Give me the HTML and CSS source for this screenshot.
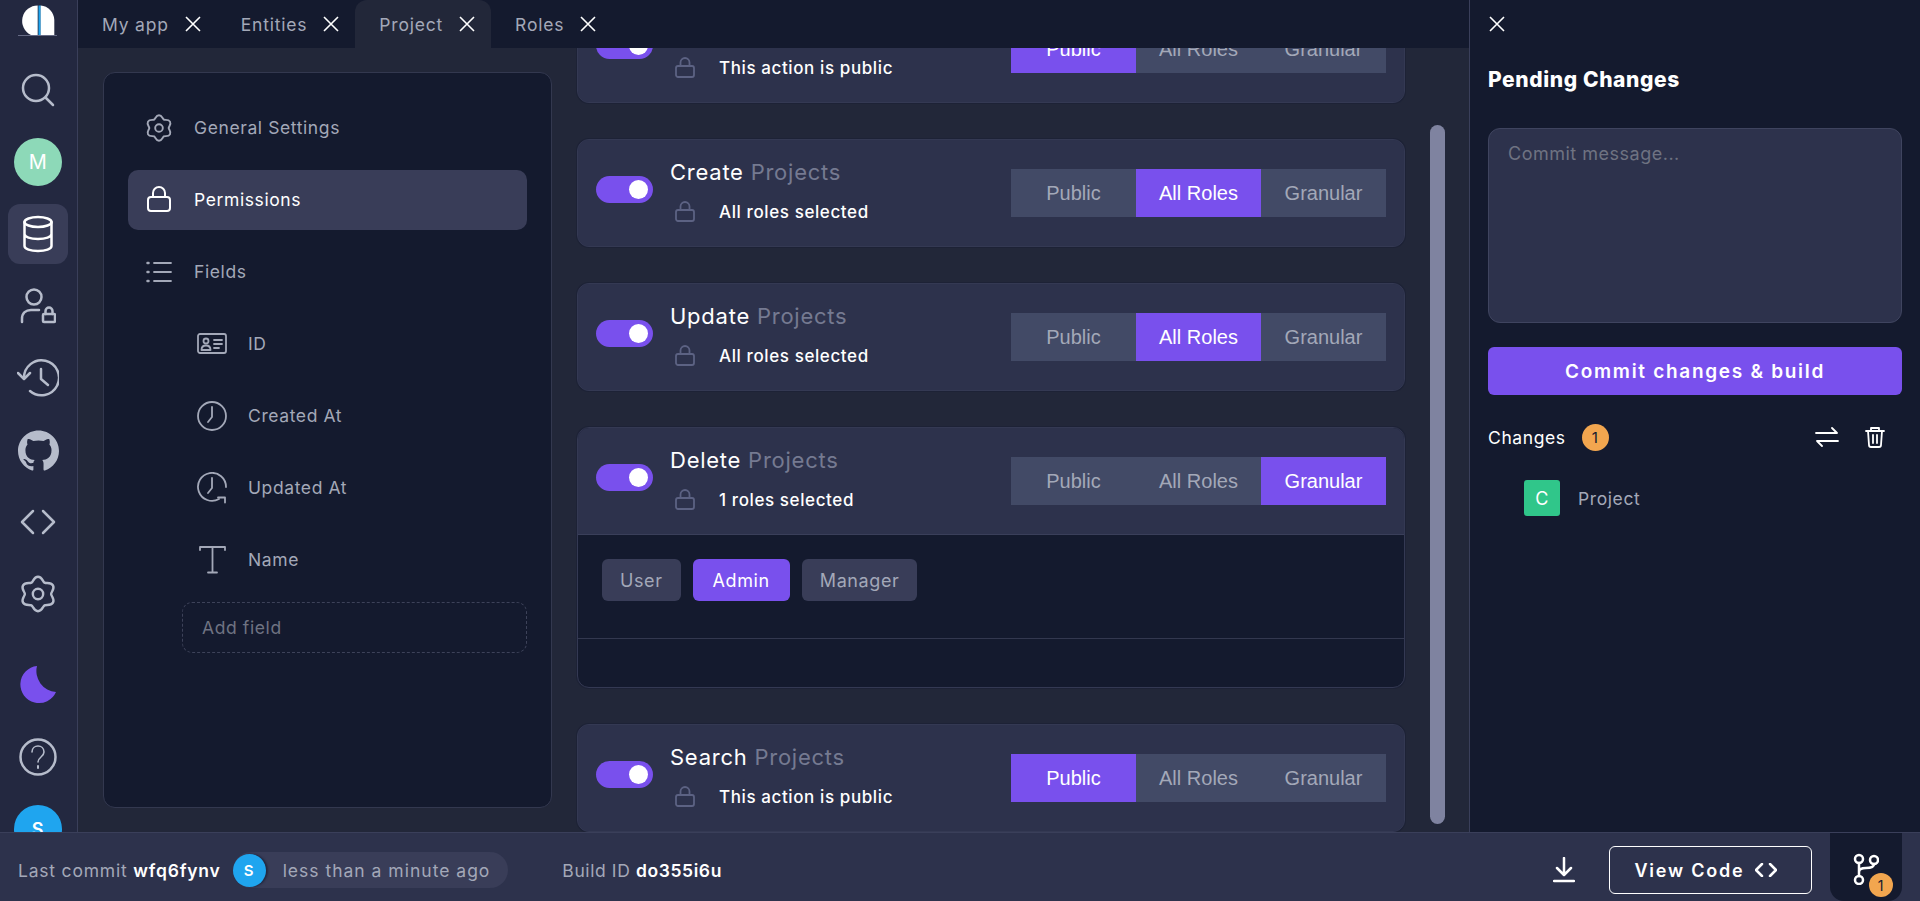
FILE: index.html
```html
<!DOCTYPE html>
<html lang="en">
<head>
    <meta charset="UTF-8">
    <meta name="viewport" content="width=device-width, initial-scale=1.0">
    <title>Project Permissions</title>
    <link rel="stylesheet" href="styles.css">
</head>
<body>
    <div class="app">
        <!-- Left icon rail -->
        <nav class="rail">
            <div class="rail-logo">
                <svg width="40" height="34" viewBox="0 0 40 34">
                    <path fill="#fff" d="M19.700 2.500A15.500 15.500 0 0 0 13 32H19.700Z"/>
                    <rect x="20.500" y="2.500" width="2.200" height="29.500" fill="#1fa5ef"/>
                    <path fill="#fff" d="M22.700 2.500C30 3 36 9 36.300 17V32H22.700Z"/>
                    <rect x="0" y="32" width="39" height="1" fill="#666b85"/>
                </svg>
            </div>
            <a class="rail-item">
                <svg class="icon" width="34" height="34" viewBox="0 0 34 34"><circle cx="15" cy="15" r="13"/><path d="M25 25l7 7"/></svg>
            </a>
            <a class="rail-item"><span class="avatar avatar-green">M</span></a>
            <a class="rail-item active">
                <svg class="icon icon-white" width="32" height="38" viewBox="0 0 32 38"><ellipse cx="16" cy="7" rx="13.500" ry="5"/><path d="M2.500 7v24c0 3 6 5 13.500 5s13.500-2 13.500-5V7M2.500 19c0 3 6 5 13.500 5s13.500-2 13.500-5"/></svg>
            </a>
            <a class="rail-item">
                <svg class="icon" width="36" height="36" viewBox="0 0 36 36"><circle cx="14" cy="9" r="7.500"/><path d="M2 34v-3c0-6 4-9 9-9h8"/><rect x="23" y="26" width="12" height="8" rx="1"/><path d="M25.500 26v-3a3.500 3.500 0 0 1 7 0v3"/></svg>
            </a>
            <a class="rail-item">
                <svg class="icon" width="42" height="38" viewBox="0 0 42 38"><path d="M7 19A17.500 17.500 0 1 1 13 32"/><path d="M1 14l6 6 6-6"/><path d="M24 10v10l7 6"/></svg>
            </a>
            <a class="rail-item">
                <svg width="41" height="41" viewBox="0 0 24 24" fill="#b6bccb"><path d="M12 .297c-6.630 0-12 5.373-12 12 0 5.303 3.438 9.800 8.205 11.385.6.113.820-.258.820-.577 0-.285-.010-1.040-.015-2.040-3.338.724-4.042-1.610-4.042-1.610C4.422 18.070 3.633 17.700 3.633 17.700c-1.087-.744.084-.729.084-.729 1.205.084 1.838 1.236 1.838 1.236 1.070 1.835 2.809 1.305 3.495.998.108-.776.417-1.305.760-1.605-2.665-.300-5.466-1.332-5.466-5.930 0-1.310.465-2.380 1.235-3.220-.135-.303-.540-1.523.105-3.176 0 0 1.005-.322 3.300 1.230.960-.267 1.980-.399 3-.405 1.020.006 2.040.138 3 .405 2.280-1.552 3.285-1.230 3.285-1.230.645 1.653.240 2.873.120 3.176.765.840 1.230 1.910 1.230 3.220 0 4.610-2.805 5.625-5.475 5.920.420.360.810 1.096.810 2.220 0 1.606-.015 2.896-.015 3.286 0 .315.210.690.825.570C20.565 22.092 24 17.592 24 12.297c0-6.627-5.373-12-12-12"/></svg>
            </a>
            <a class="rail-item">
                <svg class="icon" width="36" height="26" viewBox="0 0 36 26"><path d="M13 2L2 13l11 11M23 2l11 11-11 11"/></svg>
            </a>
            <a class="rail-item">
                <svg class="icon" width="38" height="38" viewBox="1 1 22 22"><path stroke-width="1.400" d="M12 2C14.400 2 14.760 4.820 15.800 5.420 16.840 6.020 19.460 4.920 20.660 7 21.860 9.080 19.600 10.800 19.600 12 19.600 13.200 21.860 14.920 20.660 17 19.460 19.080 16.840 17.980 15.800 18.580 14.760 19.180 14.400 22 12 22 9.600 22 9.240 19.180 8.200 18.580 7.160 17.980 4.540 19.080 3.340 17 2.140 14.920 4.400 13.200 4.400 12 4.400 10.800 2.140 9.080 3.340 7 4.540 4.920 7.160 6.020 8.200 5.420 9.240 4.820 9.600 2 12 2Z"/><circle stroke-width="1.400" cx="12" cy="12" r="3"/></svg>
            </a>
            <a class="rail-item rail-moon">
                <svg width="37" height="38" viewBox="0 0 37 38"><path fill="#7950ed" d="M17 0A18.600 18.600 0 1 0 36 26A21 21 0 0 1 17 0Z"/></svg>
            </a>
            <a class="rail-item">
                <svg class="icon" width="38" height="38" viewBox="0 0 38 38"><circle cx="19" cy="19" r="17.500"/><path stroke-width="1.600" d="M13 14c0-4 3-6 6-6s6 2 6 6c0 5-6 5-6 10"/><path stroke-width="2" d="M19 28v2"/></svg>
            </a>
            <a class="rail-item"><span class="avatar avatar-blue">S</span></a>
        </nav>

        <main class="workspace">
            <div class="tabs">
                <div class="tab"><span>My app</span><svg class="tab-close" width="18" height="18" viewBox="0 0 18 18"><path d="M2 2l14 14M16 2L2 16"/></svg></div>
                <div class="tab"><span>Entities</span><svg class="tab-close" width="18" height="18" viewBox="0 0 18 18"><path d="M2 2l14 14M16 2L2 16"/></svg></div>
                <div class="tab tab-active"><span>Project</span><svg class="tab-close" width="18" height="18" viewBox="0 0 18 18"><path d="M2 2l14 14M16 2L2 16"/></svg></div>
                <div class="tab"><span>Roles</span><svg class="tab-close" width="18" height="18" viewBox="0 0 18 18"><path d="M2 2l14 14M16 2L2 16"/></svg></div>
            </div>

            <div class="content">
                <aside class="entity-panel">
                    <a class="entity-item">
                        <svg class="icon icon-thin" width="28" height="28" viewBox="1 1 22 22"><path stroke-width="1.500" d="M12 2C14.400 2 14.760 4.820 15.800 5.420 16.840 6.020 19.460 4.920 20.660 7 21.860 9.080 19.600 10.800 19.600 12 19.600 13.200 21.860 14.920 20.660 17 19.460 19.080 16.840 17.980 15.800 18.580 14.760 19.180 14.400 22 12 22 9.600 22 9.240 19.180 8.200 18.580 7.160 17.980 4.540 19.080 3.340 17 2.140 14.920 4.400 13.200 4.400 12 4.400 10.800 2.140 9.080 3.340 7 4.540 4.920 7.160 6.020 8.200 5.420 9.240 4.820 9.600 2 12 2Z"/><circle stroke-width="1.500" cx="12" cy="12" r="3"/></svg>
                        <span>General Settings</span>
                    </a>
                    <a class="entity-item selected">
                        <svg class="icon icon-white" width="28" height="28" viewBox="0 0 26 28"><rect x="2" y="11" width="22" height="14" rx="3"/><path d="M7 11V7a6 6 0 0 1 12 0v4"/></svg>
                        <span>Permissions</span>
                    </a>
                    <a class="entity-item">
                        <svg class="icon icon-thin" width="28" height="22" viewBox="0 0 26 22"><path d="M8 2h17M8 11h17M8 20h17"/><path stroke-width="2.500" d="M1.500 2h1M1.500 11h1M1.500 20h1"/></svg>
                        <span>Fields</span>
                    </a>
                    <a class="entity-item field">
                        <svg class="icon icon-thin" width="30" height="22" viewBox="0 0 30 22"><rect x="1" y="1" width="28" height="19" rx="2"/><circle cx="9" cy="8" r="2.500"/><path d="M4.500 17c0-3 2-4.500 4.500-4.500s4.500 1.500 4.500 4.500zM17 7h8M17 11h8M17 15h5"/></svg>
                        <span>ID</span>
                    </a>
                    <a class="entity-item field">
                        <svg class="icon icon-thin" width="30" height="30" viewBox="0 0 30 30"><circle cx="15" cy="15" r="14"/><path d="M15 6v10l-4 5"/></svg>
                        <span>Created At</span>
                    </a>
                    <a class="entity-item field">
                        <svg class="icon icon-thin" width="30" height="32" viewBox="0 0 30 32"><path d="M29 15A14 14 0 1 0 22 27"/><path d="M15 6v10l-4 5"/><path d="M21 25.500h7v5"/></svg>
                        <span>Updated At</span>
                    </a>
                    <a class="entity-item field">
                        <svg class="icon icon-thin" width="30" height="30" viewBox="0 0 30 30"><path d="M3 5V2h25v3M15.500 2v25M11 27.500h9"/></svg>
                        <span>Name</span>
                    </a>
                    <input class="add-field" type="text" placeholder="Add field">
                </aside>

                <section class="permissions">
                    <div class="perm-card">
                        <div class="perm-header">
                            <span class="toggle"></span>
                            <div class="perm-text">
                                <div class="perm-title">Read <span>Projects</span></div>
                                <div class="perm-status"><svg class="perm-lock" width="20" height="21" viewBox="0 0 20 21"><rect x="1" y="9" width="18" height="11" rx="2"/><path d="M5.500 9V5.500a4.500 4.500 0 0 1 9 0V9"/></svg>This action is public</div>
                            </div>
                            <div class="segments">
                                <button class="segment on">Public</button><button class="segment">All Roles</button><button class="segment">Granular</button>
                            </div>
                        </div>
                    </div>

                    <div class="perm-card">
                        <div class="perm-header">
                            <span class="toggle"></span>
                            <div class="perm-text">
                                <div class="perm-title">Create <span>Projects</span></div>
                                <div class="perm-status"><svg class="perm-lock" width="20" height="21" viewBox="0 0 20 21"><rect x="1" y="9" width="18" height="11" rx="2"/><path d="M5.500 9V5.500a4.500 4.500 0 0 1 9 0V9"/></svg>All roles selected</div>
                            </div>
                            <div class="segments">
                                <button class="segment">Public</button><button class="segment on">All Roles</button><button class="segment">Granular</button>
                            </div>
                        </div>
                    </div>

                    <div class="perm-card">
                        <div class="perm-header">
                            <span class="toggle"></span>
                            <div class="perm-text">
                                <div class="perm-title">Update <span>Projects</span></div>
                                <div class="perm-status"><svg class="perm-lock" width="20" height="21" viewBox="0 0 20 21"><rect x="1" y="9" width="18" height="11" rx="2"/><path d="M5.500 9V5.500a4.500 4.500 0 0 1 9 0V9"/></svg>All roles selected</div>
                            </div>
                            <div class="segments">
                                <button class="segment">Public</button><button class="segment on">All Roles</button><button class="segment">Granular</button>
                            </div>
                        </div>
                    </div>

                    <div class="perm-card perm-open">
                        <div class="perm-header">
                            <span class="toggle"></span>
                            <div class="perm-text">
                                <div class="perm-title">Delete <span>Projects</span></div>
                                <div class="perm-status"><svg class="perm-lock" width="20" height="21" viewBox="0 0 20 21"><rect x="1" y="9" width="18" height="11" rx="2"/><path d="M5.500 9V5.500a4.500 4.500 0 0 1 9 0V9"/></svg>1 roles selected</div>
                            </div>
                            <div class="segments">
                                <button class="segment">Public</button><button class="segment">All Roles</button><button class="segment on">Granular</button>
                            </div>
                        </div>
                        <div class="role-list">
                            <span class="role">User</span>
                            <span class="role role-on">Admin</span>
                            <span class="role">Manager</span>
                        </div>
                        <div class="perm-foot"></div>
                    </div>

                    <div class="perm-card">
                        <div class="perm-header">
                            <span class="toggle"></span>
                            <div class="perm-text">
                                <div class="perm-title">Search <span>Projects</span></div>
                                <div class="perm-status"><svg class="perm-lock" width="20" height="21" viewBox="0 0 20 21"><rect x="1" y="9" width="18" height="11" rx="2"/><path d="M5.500 9V5.500a4.500 4.500 0 0 1 9 0V9"/></svg>This action is public</div>
                            </div>
                            <div class="segments">
                                <button class="segment on">Public</button><button class="segment">All Roles</button><button class="segment">Granular</button>
                            </div>
                        </div>
                    </div>
                </section>

                <div class="scroll-thumb"></div>
            </div>
        </main>

        <!-- Pending changes drawer -->
        <aside class="drawer">
            <svg class="drawer-close" width="18" height="18" viewBox="0 0 18 18"><path d="M2 2l14 14M16 2L2 16"/></svg>
            <h2 class="drawer-title">Pending Changes</h2>
            <textarea class="commit-message" placeholder="Commit message..."></textarea>
            <button class="commit-btn">Commit changes &amp; build</button>
            <div class="changes-row">
                <span class="changes-label">Changes</span>
                <span class="count">1</span>
                <svg class="icon icon-white changes-swap" width="24" height="20" viewBox="0 0 24 20"><path stroke-width="1.800" d="M1 6h21M17 1l5 5M23 14H2M7 19l-5-5"/></svg>
                <svg class="icon icon-white changes-trash" width="20" height="22" viewBox="0 0 20 22"><path stroke-width="1.800" d="M1 5h18M6 5V2h8v3M3 5l1 14a2 2 0 0 0 2 2h8a2 2 0 0 0 2-2l1-14M8 9v8M12 9v8"/></svg>
            </div>
            <div class="change-item">
                <span class="change-badge">C</span>
                <span>Project</span>
            </div>
        </aside>
    </div>

    <footer class="statusbar">
        <span class="muted">Last commit <b>wfq6fynv</b></span>
        <div class="commit-pill">
            <span class="avatar avatar-blue avatar-small">S</span>
            <span class="muted">less than a minute ago</span>
        </div>
        <span class="muted build-id">Build ID <b>do355i6u</b></span>
        <svg class="icon icon-white download" width="22" height="26" viewBox="0 0 22 26"><path d="M11 1v16M4 11l7 7 7-7M1 24h20"/></svg>
        <button class="view-code">View Code <svg class="icon icon-white" width="22" height="14" viewBox="0 0 22 14"><path d="M7 1L1 7l6 6M15 1l6 6-6 6"/></svg></button>
        <div class="branch-box">
            <svg class="icon icon-white" width="26" height="32" viewBox="0 0 26 32"><circle cx="6" cy="6" r="4"/><circle cx="6" cy="27" r="4"/><circle cx="21" cy="7" r="4"/><path d="M6 10v13M6 19c0-3 3-4 7-4s8-1 8-4"/></svg>
            <span class="branch-count">1</span>
        </div>
    </footer>
</body>
</html>
```

FILE: styles.css
```css
* {
    box-sizing: border-box;
}
html, body {
    height: 100%;
}
body {
    margin: 0;
    font-family: Inter, "Liberation Sans", sans-serif;
    font-size: 17.5px;
    letter-spacing: 0.6px;
    background-color: #222739;
    color: #a3a8b8;
    overflow: hidden;
}
button {
    font-family: inherit;
    border: none;
    cursor: pointer;
}
.app {
    display: flex;
    height: 832px;
}

/* icons */
.icon {
    fill: none;
    stroke: #b6bccb;
    stroke-width: 2.5;
    stroke-linecap: round;
    stroke-linejoin: round;
    flex-shrink: 0;
}
.icon-white {
    stroke: #fff;
}
.icon-thin {
    stroke: #a3a8b8;
    stroke-width: 1.800;
}
.entity-item.selected .icon {
    stroke: #fff;
    stroke-width: 2;
}

/* rail */
.rail {
    width: 78px;
    flex-shrink: 0;
    height: 832px;
    padding-left: 8px;
    background-color: #232840;
    border-right: 1px solid #3a3f5a;
    display: flex;
    flex-direction: column;
    gap: 12px;
    overflow: hidden;
}
.rail-logo {
    height: 48px;
    flex-shrink: 0;
    display: flex;
    align-items: flex-start;
    padding: 3px 0 0 10px;
}
.rail-item {
    width: 60px;
    height: 60px;
    flex-shrink: 0;
    display: flex;
    align-items: center;
    justify-content: center;
    border-radius: 12px;
}
.rail-item.active {
    background-color: #393d58;
}
.rail-moon {
    margin-top: 19px;
}
.avatar {
    width: 48px;
    height: 48px;
    border-radius: 50%;
    display: flex;
    align-items: center;
    justify-content: center;
    color: #fff;
    font-size: 20px;
    flex-shrink: 0;
}
.avatar-green {
    background-color: #8dd9b8;
}
.avatar-blue {
    background-color: #1fa5ef;
    font-size: 18px;
    font-weight: 600;
}
.avatar-small {
    width: 33px;
    height: 33px;
    font-size: 15px;
    box-shadow: 2px 0 2px #232840;
}

/* tabs */
.workspace {
    flex: 1;
    min-width: 0;
    display: flex;
    flex-direction: column;
}
.tabs {
    height: 48px;
    flex-shrink: 0;
    display: flex;
    background-color: #141a2e;
    position: relative;
    z-index: 1;
}
.tab {
    display: flex;
    align-items: center;
    gap: 15px;
    padding: 0 15px 0 24px;
    color: #a3a8b8;
    letter-spacing: 0.8px;
}
.tab-active {
    background-color: #222739;
    border-radius: 12px 12px 0 0;
}
.tab-close {
    fill: none;
    stroke: #fff;
    stroke-width: 1.600;
    flex-shrink: 0;
}

/* entity panel */
.content {
    flex: 1;
    min-height: 0;
    display: flex;
    padding-left: 25px;
    overflow: hidden;
}
.entity-panel {
    width: 449px;
    height: 736px;
    margin-top: 24px;
    margin-right: 25px;
    flex-shrink: 0;
    padding: 25px 24px 0;
    background-color: #141a2e;
    border: 1px solid #33384f;
    border-radius: 12px;
    display: flex;
    flex-direction: column;
    gap: 12px;
}
.entity-item {
    height: 60px;
    flex-shrink: 0;
    display: flex;
    align-items: center;
    gap: 21px;
    padding-left: 17px;
    border-radius: 10px;
    color: #a3a8b8;
}
.entity-item span {
    margin-top: -2px;
}
.entity-item.selected {
    background-color: #393d58;
    color: #fff;
}
.entity-item.field {
    margin-left: 54px;
    padding-left: 15px;
    gap: 21px;
}
.add-field {
    height: 51px;
    flex-shrink: 0;
    margin-left: 54px;
    padding: 0 19px;
    background: transparent;
    border: 1px dashed #3d4259;
    border-radius: 10px;
    font: inherit;
    letter-spacing: inherit;
    color: #6f7382;
    outline: none;
}
.add-field::placeholder,
.commit-message::placeholder {
    color: #6f7382;
    opacity: 1;
}

/* permission cards */
.permissions {
    width: 828px;
    flex-shrink: 0;
    margin-top: -53px;
    display: flex;
    flex-direction: column;
    gap: 36px;
}
.perm-card {
    flex-shrink: 0;
    height: 108px;
    background-color: #2d324c;
    border: 1px solid #343953;
    border-radius: 12px;
    box-shadow: 0 0 0 1px #1d2236;
    overflow: hidden;
}
.perm-open {
    height: 261px;
    background-color: #141a2e;
}
.perm-header {
    height: 106px;
    padding: 0 18px 0 18px;
    background-color: #2d324c;
    display: flex;
    align-items: center;
}
.perm-open .perm-header {
    height: 107px;
    border-bottom: 1px solid #3a3f5a;
}
.toggle {
    width: 57px;
    height: 27px;
    margin-top: -8px;
    border-radius: 14px;
    background-color: #7950ed;
    position: relative;
    flex-shrink: 0;
}
.toggle::after {
    content: "";
    position: absolute;
    top: 4px;
    right: 5px;
    width: 19px;
    height: 19px;
    border-radius: 50%;
    background-color: #fff;
}
.perm-text {
    flex: 1;
    margin-left: 17px;
}
.perm-title {
    font-size: 22px;
    letter-spacing: 0.75px;
    color: #fff;
    line-height: 30px;
    margin-top: -6px;
}
.perm-title span {
    color: #757a91;
}
.perm-status {
    display: flex;
    align-items: center;
    gap: 24px;
    margin-top: 13px;
    padding-left: 5px;
    color: #fff;
    font-size: 17px;
    font-weight: 500;
    line-height: 24px;
}
.perm-lock {
    fill: none;
    stroke: #5c6283;
    stroke-width: 1.800;
    flex-shrink: 0;
}
.segments {
    display: flex;
    flex-shrink: 0;
}
.segment {
    width: 125px;
    height: 48px;
    background-color: #424a66;
    color: #a3a8b8;
    font-family: "Liberation Sans", Arial, sans-serif;
    font-size: 20px;
    letter-spacing: 0;
}
.segment.on {
    background-color: #7950ed;
    color: #fff;
}
.role-list {
    height: 104px;
    padding: 24px 24px 0;
    display: flex;
    align-items: flex-start;
    gap: 12px;
    border-bottom: 1px solid #33384f;
}
.role {
    height: 42px;
    display: flex;
    align-items: center;
    padding: 0 18px;
    background-color: #393d58;
    border-radius: 6px;
    color: #a3a8b8;
    font-size: 18px;
}
.role-on {
    padding: 0 20px;
    background-color: #7950ed;
    color: #fff;
}
.scroll-thumb {
    width: 15px;
    margin: 77px 0 8px 25px;
    flex-shrink: 0;
    background-color: #7f83a0;
    border-radius: 8px;
}

/* drawer */
.drawer {
    width: 451px;
    flex-shrink: 0;
    padding: 15px 18px 0;
    background-color: #141a2e;
    border-left: 1px solid #3a3f5a;
    position: relative;
    z-index: 1;
    display: flex;
    flex-direction: column;
}
.drawer-close {
    fill: none;
    stroke: #fff;
    stroke-width: 1.600;
    flex-shrink: 0;
}
.drawer-title {
    margin: 32px 0 0;
    font-size: 21px;
    line-height: 30px;
    font-weight: 800;
    color: #fff;
}
.commit-message {
    width: 100%;
    height: 195px;
    margin-top: 33px;
    padding: 14px 19px;
    background-color: #2d324c;
    border: 1px solid #3f445f;
    border-radius: 12px;
    font: inherit;
    font-size: 18px;
    letter-spacing: 0.5px;
    color: #fff;
    resize: none;
    outline: none;
}
.commit-btn {
    width: 100%;
    height: 48px;
    margin-top: 24px;
    background-color: #7950ed;
    border-radius: 6px;
    color: #fff;
    font-size: 19px;
    font-weight: 600;
    letter-spacing: 1.700px;
}
.changes-row {
    display: flex;
    align-items: center;
    margin-top: 29px;
    height: 26px;
    color: #fff;
}
.count {
    width: 27px;
    height: 27px;
    margin-left: 16px;
    border-radius: 50%;
    background-color: #f2a64f;
    color: #141a2e;
    display: flex;
    align-items: center;
    justify-content: center;
    font-size: 15px;
}
.changes-swap {
    margin-left: auto;
}
.changes-trash {
    margin-left: 26px;
    margin-right: 17px;
}
.change-item {
    display: flex;
    align-items: center;
    gap: 18px;
    margin: 30px 0 0 36px;
}
.change-badge {
    width: 36px;
    height: 36px;
    border-radius: 3px;
    background-color: #30c68a;
    color: #fff;
    display: flex;
    align-items: center;
    justify-content: center;
    font-size: 18px;
}

/* status bar */
.statusbar {
    height: 69px;
    padding: 6px 18px 0;
    background-color: #2d324c;
    border-top: 1px solid #3a3f5a;
    display: flex;
    align-items: center;
    letter-spacing: 0.8px;
}
.muted {
    color: #a3a8b8;
}
.muted b {
    color: #fff;
    font-weight: 600;
}
.commit-pill {
    height: 36px;
    margin-left: 12px;
    padding-right: 18px;
    background-color: #393d58;
    border-radius: 18px;
    display: flex;
    align-items: center;
    gap: 17px;
}
.commit-pill .muted {
    letter-spacing: 1px;
}
.build-id {
    margin-left: 54px;
    letter-spacing: 0.6px;
}
.download {
    margin-left: auto;
}
.view-code {
    width: 203px;
    height: 48px;
    margin-left: 34px;
    padding: 0 10px 0 0;
    background: transparent;
    border: 1px solid #fff;
    border-radius: 6px;
    color: #fff;
    font-size: 18px;
    font-weight: 600;
    letter-spacing: 1.800px;
    display: flex;
    align-items: center;
    justify-content: center;
    gap: 10px;
}
.branch-box {
    width: 72px;
    height: 68px;
    margin-left: 18px;
    margin-top: -6px;
    align-self: flex-start;
    background-color: #141a2e;
    border-radius: 0 0 14px 14px;
    position: relative;
    display: flex;
    justify-content: center;
    padding-top: 20px;
}
.branch-count {
    position: absolute;
    left: 39px;
    top: 40px;
    width: 24px;
    height: 24px;
    border-radius: 50%;
    background-color: #f2a64f;
    color: #141a2e;
    font-size: 14px;
    display: flex;
    align-items: center;
    justify-content: center;
}
```
